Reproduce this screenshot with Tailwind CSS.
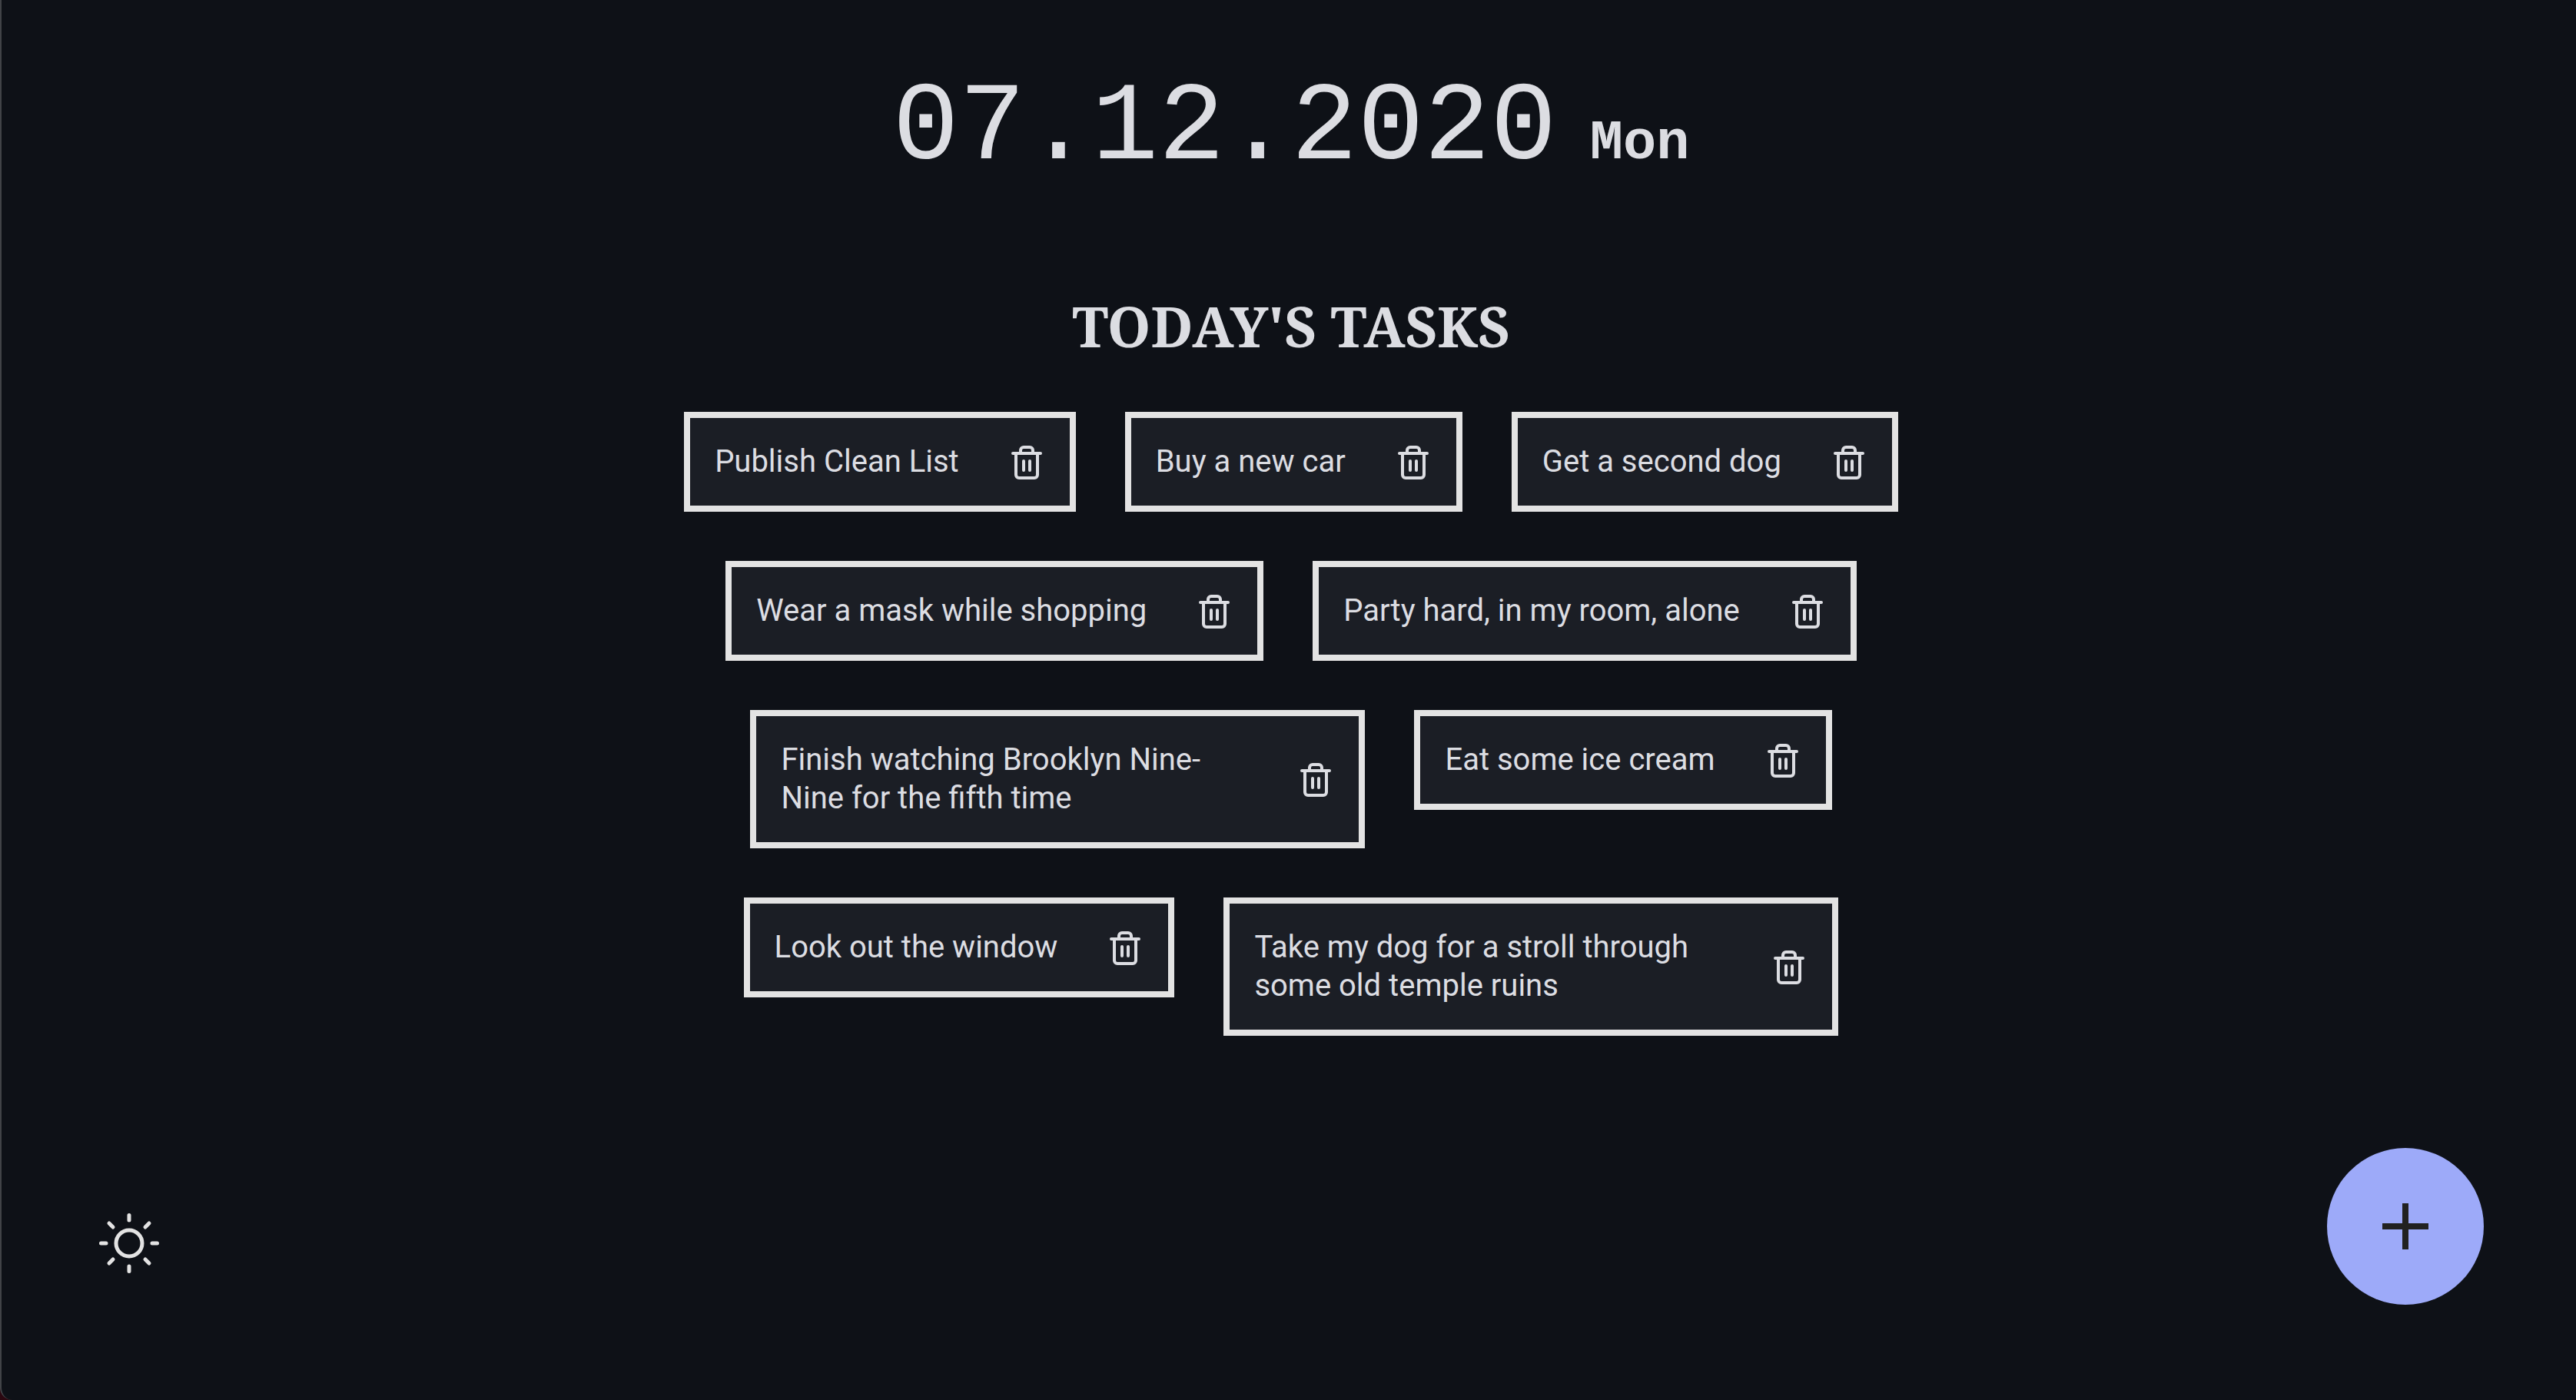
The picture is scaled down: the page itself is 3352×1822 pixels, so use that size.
<!DOCTYPE html>
<html lang="en">
<head>
<meta charset="utf-8">
<title>Clean List</title>
<script src="https://cdn.jsdelivr.net/npm/@tailwindcss/browser@4"></script>
</head>
<body class="bg-[#2b0710]">
<svg class="hidden">
  <symbol id="trash" viewBox="0 0 48 48" fill="none" stroke="currentColor" stroke-width="4" stroke-linecap="round" stroke-linejoin="round">
    <path d="M6 13H42M16 13V9a4 4 0 0 1 4-4h8a4 4 0 0 1 4 4v4M10 13V41a4 4 0 0 0 4 4H34a4 4 0 0 0 4-4V13M20 23V35M28 23V35"/>
  </symbol>
</svg>
<div class="flex min-h-screen flex-col rounded-bl-[16px] border-l-2 border-[#414347] bg-[#0e1117] font-[Roboto,sans-serif] text-[#dcdde2]">
  <header class="pt-[88px] pl-1.5 text-center font-['Liberation_Mono',monospace] text-[144px] leading-[160px] whitespace-pre"><time datetime="2020-12-07">07.12.2020<span class="text-[72px] leading-none font-bold"> Mon</span></time></header>
  <main class="flex flex-col items-center pt-32 pl-1.5">
    <h1 class="font-['Noto_Serif','Liberation_Serif',serif] text-[72px] leading-[96px] font-bold">TODAY'S TASKS</h1>
    <ul class="mt-16 flex max-w-[1700px] flex-wrap items-start justify-center gap-16 text-[40px] leading-[50px]">
      <li class="flex items-center gap-16 border-8 border-[#e3e3e3] bg-[#1b1e25] p-8"><span class="max-w-[608px]">Publish Clean List</span><button aria-label="Delete" class="shrink-0"><svg class="size-12"><use href="#trash"/></svg></button></li>
      <li class="flex items-center gap-16 border-8 border-[#e3e3e3] bg-[#1b1e25] p-8"><span class="max-w-[608px]">Buy a new car</span><button aria-label="Delete" class="shrink-0"><svg class="size-12"><use href="#trash"/></svg></button></li>
      <li class="flex items-center gap-16 border-8 border-[#e3e3e3] bg-[#1b1e25] p-8"><span class="max-w-[608px]">Get a second dog</span><button aria-label="Delete" class="shrink-0"><svg class="size-12"><use href="#trash"/></svg></button></li>
      <li class="flex items-center gap-16 border-8 border-[#e3e3e3] bg-[#1b1e25] p-8"><span class="max-w-[608px]">Wear a mask while shopping</span><button aria-label="Delete" class="shrink-0"><svg class="size-12"><use href="#trash"/></svg></button></li>
      <li class="flex items-center gap-16 border-8 border-[#e3e3e3] bg-[#1b1e25] p-8"><span class="max-w-[608px]">Party hard, in my room, alone</span><button aria-label="Delete" class="shrink-0"><svg class="size-12"><use href="#trash"/></svg></button></li>
      <li class="flex items-center gap-16 border-8 border-[#e3e3e3] bg-[#1b1e25] p-8"><span class="max-w-[608px]">Finish watching Brooklyn Nine-Nine for the fifth time</span><button aria-label="Delete" class="shrink-0"><svg class="size-12"><use href="#trash"/></svg></button></li>
      <li class="flex items-center gap-16 border-8 border-[#e3e3e3] bg-[#1b1e25] p-8"><span class="max-w-[608px]">Eat some ice cream</span><button aria-label="Delete" class="shrink-0"><svg class="size-12"><use href="#trash"/></svg></button></li>
      <li class="flex items-center gap-16 border-8 border-[#e3e3e3] bg-[#1b1e25] p-8"><span class="max-w-[608px]">Look out the window</span><button aria-label="Delete" class="shrink-0"><svg class="size-12"><use href="#trash"/></svg></button></li>
      <li class="flex items-center gap-16 border-8 border-[#e3e3e3] bg-[#1b1e25] p-8"><span class="max-w-[608px]">Take my dog for a stroll through some old temple ruins</span><button aria-label="Delete" class="shrink-0"><svg class="size-12"><use href="#trash"/></svg></button></li>
    </ul>
  </main>
  <footer class="mt-auto flex items-end justify-between pr-[120px] pb-[124px] pl-[126px]">
    <button aria-label="Switch theme" class="mb-10 text-[#e3e3e3]">
      <svg class="size-20" viewBox="-40 -40 80 80" fill="none" stroke="currentColor" stroke-width="5" stroke-linecap="round">
        <circle r="17"/>
        <path d="M0-36.500V-30M0 36.500V30M-36.500 0H-30M36.500 0H30M-26-26L-21-21M26-26L21-21M-26 26L-21 21M26 26L21 21"/>
      </svg>
    </button>
    <button aria-label="Add task" class="flex size-[204px] items-center justify-center rounded-full bg-[#9daaf9] text-[#212121]">
      <svg class="size-[60px]" viewBox="0 0 60 60" fill="none" stroke="currentColor" stroke-width="8"><path d="M30 0V60M0 30H60"/></svg>
    </button>
  </footer>
</div>
</body>
</html>
